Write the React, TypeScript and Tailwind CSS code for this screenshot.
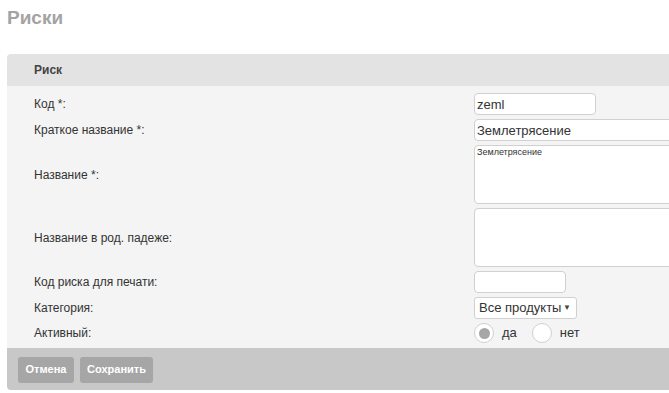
import React from "react";

const font = { fontFamily: '"Liberation Sans", Arial, sans-serif' };

function Row({ label, h, children }: { label: string; h: string; children: React.ReactNode }) {
  return (
    <div className={`flex items-center ${h}`}>
      <div className="w-[440px] shrink-0 text-[12px] text-[#333]">{label}</div>
      <div className="flex-1 flex items-center">{children}</div>
    </div>
  );
}

export default function App() {
  return (
    <div className="w-[669px] h-[393px] overflow-hidden bg-white" style={font}>
      <h1 className="pl-[7px] pt-[6px] h-[54px] text-[19px] font-bold text-[#a3a3a3] leading-[24px]">Риски</h1>

      <div className="ml-[7px] w-[720px] rounded-[4px] overflow-hidden">
        {/* Header */}
        <div className="h-[32px] bg-[#e3e3e3] flex items-center pl-[27px] text-[12px] font-bold text-[#444]">
          Риск
        </div>

        {/* Body */}
        <div className="bg-[#f4f4f4] pl-[27px] pt-[7px] pb-[5px] flex flex-col gap-[4px]">
          <Row label="Код *:" h="h-[22px]">
            <input
              readOnly
              value="zeml"
              className="w-[122px] h-[22px] bg-white border border-[#d0d0d0] rounded-[4px] px-[2px] text-[13px] text-[#333] outline-none"
            />
          </Row>
          <Row label="Краткое название *:" h="h-[22px]">
            <input
              readOnly
              value="Землетрясение"
              className="w-[260px] h-[22px] bg-white border border-[#d0d0d0] rounded-[4px] px-[2px] text-[13px] text-[#333] outline-none"
            />
          </Row>
          <Row label="Название *:" h="h-[59px]">
            <textarea
              readOnly
              value="Землетрясение"
              className="w-[260px] h-[59px] bg-white border border-[#d0d0d0] rounded-[4px] px-[2px] pt-[1px] text-[9px] leading-[11px] text-[#333] resize-none outline-none"
            />
          </Row>
          <Row label="Название в род. падеже:" h="h-[59px]">
            <textarea
              readOnly
              value=""
              className="w-[260px] h-[59px] bg-white border border-[#d0d0d0] rounded-[4px] px-[2px] resize-none outline-none"
            />
          </Row>
          <Row label="Код риска для печати:" h="h-[22px]">
            <input
              readOnly
              value=""
              className="w-[92px] h-[22px] bg-white border border-[#d0d0d0] rounded-[4px] px-[2px] outline-none"
            />
          </Row>
          <Row label="Категория:" h="h-[22px]">
            <div className="w-[103px] h-[22px] bg-white border border-[#d0d0d0] rounded-[3px] flex items-center justify-between pl-[4px] pr-[5px] text-[13px] text-[#333]">
              <span>Все продукты</span>
              <span className="text-[8px] text-[#444]">▼</span>
            </div>
          </Row>
          <Row label="Активный:" h="h-[20px]">
            <div className="flex items-center text-[13px] text-[#333]">
              <span className="w-[20px] h-[20px] rounded-full bg-white border border-[#d0d0d0] flex items-center justify-center">
                <span className="w-[11px] h-[11px] rounded-full bg-[#a6a6a6]" />
              </span>
              <span className="ml-[8px]">да</span>
              <span className="ml-[15px] w-[20px] h-[20px] rounded-full bg-white border border-[#d0d0d0]" />
              <span className="ml-[8px]">нет</span>
            </div>
          </Row>
        </div>

        {/* Footer */}
        <div className="h-[42px] bg-[#c8c8c8] flex items-center gap-[6px] pl-[11px] pt-[1px]">
          <button className="h-[26px] w-[56px] rounded-[3px] bg-[#a6a6a6] text-white text-[11px] font-bold">Отмена</button>
          <button className="h-[26px] w-[73px] rounded-[3px] bg-[#a6a6a6] text-white text-[11px] font-bold">Сохранить</button>
        </div>
      </div>
    </div>
  );
}
